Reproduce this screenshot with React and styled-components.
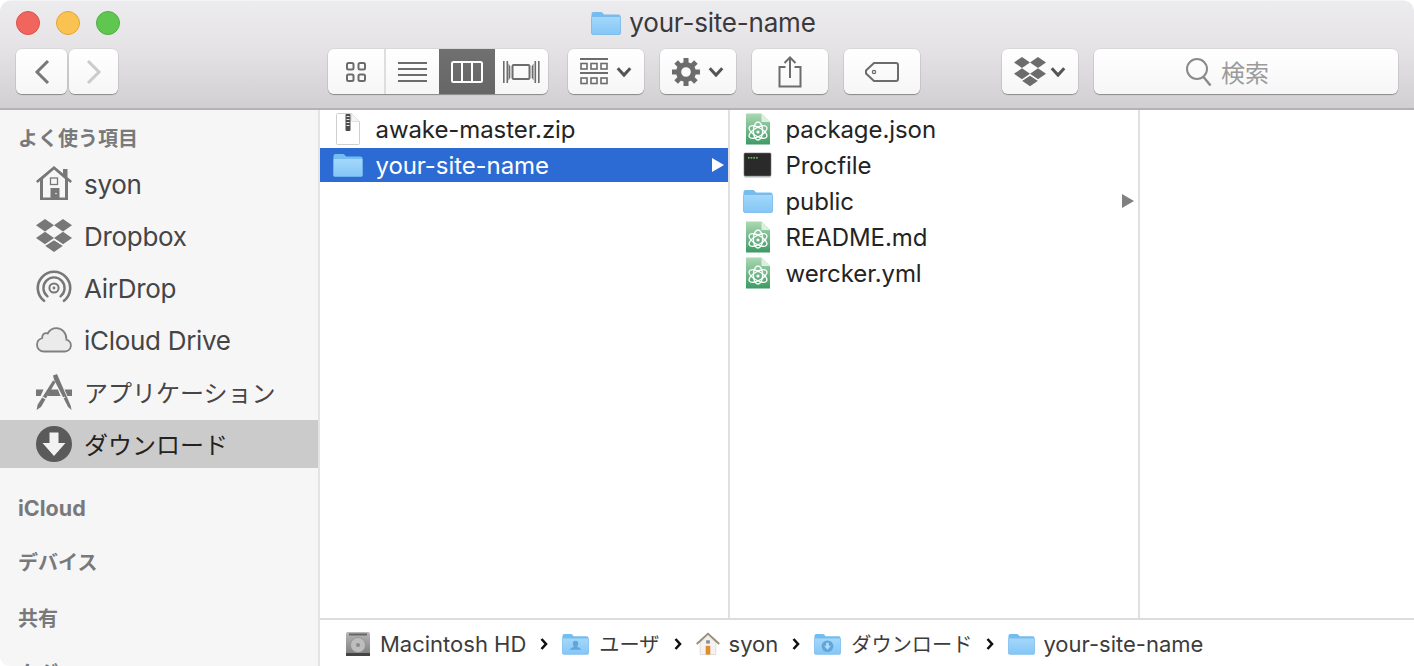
import React from "react";
import styled, { createGlobalStyle } from "styled-components";

const Global = createGlobalStyle`
  html, body { margin: 0; padding: 0; background: #fff; overflow: hidden; }
  * { box-sizing: border-box; }
`;
const FONT = `Inter, "Noto Sans CJK JP", sans-serif`;

const Window = styled.div`
  width: 1414px; height: 666px; overflow: hidden; display: flex; flex-direction: column;
  border-radius: 12px 12px 10px 10px; background: #fff; font-family: ${FONT};
`;
const TitleBar = styled.header`
  height: 110px; flex: none; display: flex; flex-direction: column;
  background: linear-gradient(#ecebee, #e6e4e7 40%, #d1cfd1);
  border-bottom: 2px solid #b4b2b4; border-top: 1px solid #f4f3f5;
`;
const TitleRow = styled.div`
  height: 43px; flex: none; display: grid; grid-template-columns: 1fr auto 1fr; align-items: center; padding: 0 16px;
`;
const Lights = styled.div`display: flex; gap: 16px;`;
const Light = styled.span`
  width: 24px; height: 24px; border-radius: 50%; background: ${p => p.$c}; border: 1px solid ${p => p.$b};
`;
const Title = styled.div`
  display: flex; align-items: center; gap: 8px; font-size: 26px; color: #3a393b; letter-spacing: -0.2px; margin-right: 7px;
`;
const Toolbar = styled.div`display: flex; align-items: flex-start; padding: 5px 16px 0;`;
const ButtonBase = styled.div`
  height: 45px; display: flex; align-items: center; justify-content: center; color: #6c6c6c;
  background: linear-gradient(#ffffff, #f6f6f6); border-radius: 6px;
  box-shadow: 0 1px 1px rgba(0,0,0,.32), 0 0 0 .5px rgba(0,0,0,.1);
`;
const NavButton = styled(ButtonBase)`width: ${p => p.$w}px; margin-right: ${p => p.$mr || 0}px;`;
const ToolButton = styled(ButtonBase)`width: 76px; gap: ${p => p.$gap ?? 8}px; margin-left: ${p => p.$ml || 16}px;`;
const Segmented = styled(ButtonBase)`margin-left: 210px; margin-right: 4px; width: 220px; overflow: hidden; justify-content: flex-start;`;
const Segment = styled.div`
  width: ${p => p.$w}px; height: 100%; display: flex; align-items: center; justify-content: center;
  color: ${p => p.$active ? "#fff" : "#6c6c6c"};
  background: ${p => p.$active ? "linear-gradient(#707070, #666)" : "transparent"};
  border-right: ${p => p.$sep ? "2px solid #dedede" : "none"};
`;
const SearchBox = styled(ButtonBase)`
  width: 304px; margin-left: 16px; gap: 8px; font-size: 24px; color: #9b9b9b; padding-right: 38px;
`;

const Main = styled.div`flex: 1; display: flex; min-height: 0;`;
const Sidebar = styled.aside`
  width: 320px; flex: none; background: #f6f6f6; border-right: 2px solid #e4e4e4; overflow: hidden;
`;
const Heading = styled.div`
  height: ${p => p.$h || 55}px; line-height: ${p => p.$lh || 55}px; padding-left: 18px; font-size: ${p => p.$latin ? 21.5 : 20}px; font-weight: 700; color: #79797b; white-space: nowrap;
`;
const SideList = styled.div`display: flex; flex-direction: column; gap: 4px; margin-bottom: 13px;`;
const SideItem = styled.div`
  height: 48px; display: flex; align-items: center; gap: 12px; padding-left: 36px;
  font-size: ${p => p.$cjk ? 24 : 26}px; letter-spacing: ${p => p.$cjk ? 0 : -0.3}px;
  color: ${p => p.$sel ? "#222" : "#454545"}; background: ${p => p.$sel ? "#cbcbcb" : "transparent"};
`;
const SideIcon = styled.span`width: 36px; height: 36px; flex: none; display: flex; align-items: center; justify-content: center;`;
const CjkLabel = styled.span`margin-top: -2px;`;

const Content = styled.div`flex: 1; min-width: 0; display: flex; flex-direction: column;`;
const Columns = styled.div`flex: 1; display: flex; min-height: 0;`;
const Column = styled.div`
  width: ${p => p.$w ? p.$w + "px" : "auto"}; flex: ${p => p.$w ? "none" : 1};
  border-right: ${p => p.$w ? "2px solid #e0e0e0" : "none"}; padding-top: 2px; display: flex; flex-direction: column; gap: 2px;
`;
const FileRow = styled.div`
  height: 34px; display: flex; align-items: center; gap: 11.5px; padding: 0 4px 0 12px; font-size: 24px; letter-spacing: -0.08px;
  color: ${p => p.$sel ? "#fff" : "#242424"}; background: ${p => p.$sel ? "#2c6bd4" : "transparent"};
`;
const FileIcon = styled.span`width: 32px; height: 34px; flex: none; display: flex; align-items: center; justify-content: center;`;
const Arrow = styled.span`
  margin-left: auto; width: 0; height: 0; border-left: 12px solid ${p => p.$sel ? "#fff" : "#808080"};
  border-top: 7px solid transparent; border-bottom: 7px solid transparent;
`;
const PathBar = styled.div`
  height: 48px; flex: none; border-top: 2px solid #dcdcdc; display: flex; align-items: center; padding: 1px 0 0 26px; font-size: 22px; color: #3c3c3c;
`;
const Crumb = styled.span`display: flex; align-items: center; gap: ${p => p.$gap || 10}px; white-space: nowrap;`;
const CrumbCjk = styled.span`font-size: 20.2px;`;
const CrumbSep = styled.span`display: flex; align-items: center; margin: 0 14px;`;

const Chevron = ({ w = 16, h = 10, c = "#555", sw = 2.4 }) => (
  <svg width={w} height={h} viewBox="0 0 12 8"><path d="M1 1l5 5.5L11 1" fill="none" stroke={c} strokeWidth={sw} /></svg>
);
const PathChevron = () => (
  <svg width="8" height="14" viewBox="0 0 8 14"><path d="M1.5 2l4.5 5-4.5 5" fill="none" stroke="#111" strokeWidth="2.6" /></svg>
);

const Folder = ({ w = 30, h = 24, glyph, id = "f" }) => (
  <svg width={w} height={h} viewBox="0 0 30 24">
    <defs>
      <linearGradient id={id} x1="0" y1="0" x2="0" y2="1">
        <stop offset="0" stopColor="#a4d8fb" /><stop offset="1" stopColor="#84c6f6" />
      </linearGradient>
    </defs>
    <path d="M0.5 3a2 2 0 0 1 2-2h7.5a2 2 0 0 1 1.5.7L13 3.5h14.5a2 2 0 0 1 2 2V6H.5z" fill="#74bdf0" />
    <path d="M.5 6.5a1 1 0 0 1 1-1h27a1 1 0 0 1 1 1V22a1.5 1.5 0 0 1-1.5 1.5H2A1.5 1.5 0 0 1 .5 22z" fill={`url(#${id})`} stroke="#74b8ea" strokeWidth=".8" />
    {glyph === "user" && <path d="M15 8.5a3 3 0 0 1 3 3.2c0 1.3-.6 2.4-1.4 3 .3 1 3.4 1.2 4.4 2.8v1H9v-1c1-1.6 4.1-1.8 4.4-2.8-.8-.6-1.4-1.7-1.4-3a3 3 0 0 1 3-3.2z" fill="#5fa6dc" />}
    {glyph === "down" && <g><circle cx="15" cy="14.5" r="6.5" fill="#5fa6dc" /><path d="M13.6 10.5h2.8v3.5h2.4L15 18.5 11.2 14h2.4z" fill="#b5ddfa" /></g>}
  </svg>
);

const AtomDoc = ({ id }) => (
  <svg width="24" height="32" viewBox="0 0 24 32">
    <defs>
      <linearGradient id={id} x1="0" y1="0" x2="0" y2="1">
        <stop offset="0" stopColor="#acd8b2" /><stop offset=".5" stopColor="#74ba8c" /><stop offset="1" stopColor="#3c9a64" />
      </linearGradient>
    </defs>
    <path d="M0 .5h15.5L24 9V31.5H0z" fill={`url(#${id})`} />
    <path d="M15.5 .5L24 9h-8.5z" fill="#dcefdc" />
    <g fill="none" stroke="#fff" strokeWidth="1.3">
      <ellipse cx="12" cy="19" rx="10" ry="4.4" transform="rotate(30 12 19)" />
      <ellipse cx="12" cy="19" rx="10" ry="4.4" transform="rotate(-30 12 19)" />
      <ellipse cx="12" cy="18" rx="4.6" ry="9" />
    </g>
    <circle cx="12" cy="19" r="1.6" fill="#fff" />
  </svg>
);
const Terminal = () => (
  <svg width="30" height="26" viewBox="0 0 30 26">
    <rect x="1" y="1" width="27" height="23" rx="1" fill="#2a2a2a" stroke="#777" strokeWidth=".6" />
    <rect x="1.5" y="24" width="26" height="1.5" fill="#b5b5b5" />
    <g fill="#6fc24f"><rect x="5" y="5" width="1.6" height="1.6" /><rect x="7.7" y="5" width="1.6" height="1.6" /><rect x="10.4" y="5" width="1.6" height="1.6" /><rect x="13.1" y="5" width="1.6" height="1.6" /></g>
  </svg>
);
const ZipDoc = () => (
  <svg width="24" height="32" viewBox="0 0 24 32">
    <path d="M1.5.5h14l8 8v22a1 1 0 0 1-1 1h-21a1 1 0 0 1-1-1V1.5a1 1 0 0 1 1-1z" fill="#fff" stroke="#cfcfcf" />
    <path d="M15.5.5v7a1 1 0 0 0 1 1h7" fill="#f4f4f4" stroke="#e0e0e0" />
    <rect x="9.5" y="1" width="5" height="17" rx="1" fill="#4a4a4a" />
    <g fill="#e6e6e6"><rect x="10.5" y="3" width="3" height="1" /><rect x="10.5" y="6" width="3" height="1" /><rect x="10.5" y="9" width="3" height="1" /><rect x="10.5" y="12" width="3" height="1" /></g>
  </svg>
);

const House = () => (
  <svg width="36" height="36" viewBox="0 0 36 36">
    <path fillRule="evenodd" fill="#777" d="M18 0L27 7.5V3h4.5v8.2L36 15l-1.6 2L32 15v19H4V15L1.6 17 0 15z M18 3.6L7 13v18.4h7.5V22h9v9.4H29V13z" />
    <rect x="14.5" y="12" width="7" height="6.5" fill="none" stroke="#777" strokeWidth="1.3" />
    <rect x="15" y="22" width="8" height="11" fill="#777" />
    <circle cx="20" cy="27.5" r=".8" fill="#f6f6f6" />
  </svg>
);
const DropboxGlyph = ({ size = 36, c = "#777" }) => (
  <svg width={size} height={size} viewBox="0 0 36 36">
    <g fill={c}>
      <path d="M9 1L18 7.2 9 13.4 0 7.2z" /><path d="M27 1l9 6.2-9 6.2L18 7.2z" />
      <path d="M9 13.8l9 6.2-9 6.2-9-6.2z" /><path d="M27 13.8l9 6.2-9 6.2-9-6.2z" />
      <path d="M18 22l9 5.8 -9 6.2-9-6.2z" />
    </g>
    <path d="M9 27.2L18 21.4l9 5.8" fill="none" stroke="#f6f6f6" strokeWidth="1.2" />
  </svg>
);
const arc = (r) => {
  const a = 38 * Math.PI / 180;
  const x = r * Math.sin(a), y = r * Math.cos(a);
  return `M${18 - x} ${18 + y}A${r} ${r} 0 1 1 ${18 + x} ${18 + y}`;
};
const AirDrop = () => (
  <svg width="36" height="36" viewBox="0 0 36 36">
    <g fill="none" stroke="#777" strokeLinecap="round">
      <path d={arc(16.2)} strokeWidth="2.6" />
      <path d={arc(10.6)} strokeWidth="2.4" />
      <circle cx="18" cy="18" r="4.6" strokeWidth="2" />
    </g>
    <circle cx="18" cy="18" r="1.4" fill="#777" />
  </svg>
);
const Cloud = () => (
  <svg width="36" height="26" viewBox="0 0 36 26">
    <path d="M8 24.5h21a6 6 0 0 0 1.4-11.8C30.6 6 26 1.2 20.5 1.2c-3.8 0-7 2-8.8 5.3C10 5.6 7.2 6.2 6.4 9c-.2.7-.2 1.3-.2 2C3 12 1 14.8 1 17.8c0 3.8 3 6.7 7 6.7z" fill="#ebebeb" stroke="#808080" strokeWidth="1.8" />
  </svg>
);
const Apps = () => (
  <svg width="36" height="36" viewBox="0 0 36 36">
    <g fill="#777">
      <path d="M0 15.5h7.5L4.6 22H0zM36 15.5h-7.5l2.9 6.5H36zM11.5 22l2.6-6.5h7.8l2.6 6.5z" />
      <path d="M17 1.5L21 0l13.6 31.5 1 4.5-3.5-3L18 5.5z" />
      <path d="M17 6.5l2.6 1.6L5 33l-4.4 3 1-5.2z" />
    </g>
    <path d="M25 25l4-2" stroke="#f6f6f6" strokeWidth="1.2" />
    <path d="M10 25l-3.6-2" stroke="#f6f6f6" strokeWidth="1.2" />
  </svg>
);
const Download = () => (
  <svg width="36" height="36" viewBox="0 0 36 36">
    <circle cx="18" cy="18" r="18" fill="#5a5a5a" />
    <path d="M13.5 6.5h9V17h7L18 30 6.5 17h7z" fill="#f2f2f2" />
  </svg>
);

const HD = () => (
  <svg width="24" height="26" viewBox="0 0 24 26">
    <defs><linearGradient id="hd" x1="0" y1="0" x2="0" y2="1"><stop offset="0" stopColor="#b8b8b8" /><stop offset="1" stopColor="#7c7c7c" /></linearGradient></defs>
    <rect x="0" y="1" width="24" height="24" rx="2" fill="url(#hd)" />
    <rect x="3" y="2.5" width="18" height="2" fill="#666" />
    <circle cx="12" cy="14" r="7.5" fill="#bdbdbd" stroke="#8e8e8e" strokeWidth=".7" />
    <circle cx="12" cy="14" r="2" fill="#8a8a8a" />
    <rect x="0" y="22" width="24" height="3" fill="#444" />
  </svg>
);
const SmallHome = () => (
  <svg width="24" height="26" viewBox="0 0 26 26">
    <path d="M4.5 11.5L13 4l8.5 7.5V24.5h-17z" fill="#f2f2f2" stroke="#cfcfcf" strokeWidth=".7" />
    <path d="M.8 13L13 1.8 25.2 13" fill="none" stroke="#9a8a70" strokeWidth="2" />
    <rect x="10.5" y="15" width="5" height="9.5" fill="#e28b2c" />
    <rect x="11" y="9" width="4" height="3.5" fill="#8b8b8b" />
  </svg>
);

const IconsView = () => (
  <svg width="22" height="22" viewBox="0 0 22 22" fill="none" stroke="currentColor" strokeWidth="2">
    <rect x="2" y="2" width="6.5" height="6.5" rx="1.5" /><rect x="13.5" y="2" width="6.5" height="6.5" rx="1.5" />
    <rect x="2" y="13.5" width="6.5" height="6.5" rx="1.5" /><rect x="13.5" y="13.5" width="6.5" height="6.5" rx="1.5" />
  </svg>
);
const ListView = () => (
  <svg width="30" height="22" viewBox="0 0 30 22" fill="currentColor">
    <rect y="1" width="29" height="2" /><rect y="7" width="29" height="2" /><rect y="13" width="29" height="2" /><rect y="19" width="29" height="2" />
  </svg>
);
const ColumnView = () => (
  <svg width="32" height="22" viewBox="0 0 32 22" fill="none" stroke="currentColor" strokeWidth="2">
    <rect x="1" y="1" width="30" height="20" rx="1.5" /><path d="M11 1v20M21 1v20" />
  </svg>
);
const FlowView = () => (
  <svg width="37" height="22" viewBox="0 0 37 22" fill="currentColor">
    <rect x="0" y="0" width="1.6" height="22" /><rect x="3.5" y="0" width="1.6" height="22" />
    <path d="M5.5 2.5l1.8 3v11l-1.8 3z" />
    <rect x="9.5" y="4" width="17" height="14" rx="1.2" fill="none" stroke="currentColor" strokeWidth="2" />
    <path d="M30.5 2.5l-1.8 3v11l1.8 3z" />
    <rect x="31.5" y="0" width="1.6" height="22" /><rect x="35" y="0" width="1.6" height="22" />
  </svg>
);
const Arrange = () => (
  <svg width="28" height="30" viewBox="0 0 28 30" fill="none" stroke="currentColor">
    <path d="M0 2h28M0 16h28" strokeWidth="2" />
    <g strokeWidth="1.6">
      <rect x="1" y="6.5" width="6" height="5.5" /><rect x="11" y="6.5" width="6" height="5.5" /><rect x="21" y="6.5" width="6" height="5.5" />
      <rect x="1" y="21" width="6" height="5.5" /><rect x="11" y="21" width="6" height="5.5" /><rect x="21" y="21" width="6" height="5.5" />
    </g>
  </svg>
);
const Gear = () => (
  <svg width="28" height="28" viewBox="0 0 28 28" fill="#6c6c6c">
    <path fillRule="evenodd" d="M14 4a10 10 0 1 1 0 20 10 10 0 0 1 0-20zM14 9.2a4.8 4.8 0 1 0 0 9.6 4.8 4.8 0 0 0 0-9.6z" />
    {[0, 45, 90, 135, 180, 225, 270, 315].map(a => (
      <rect key={a} x="11.5" y="0" width="5" height="6" transform={`rotate(${a} 14 14)`} />
    ))}
  </svg>
);
const Share = () => (
  <svg width="24" height="32" viewBox="0 0 24 32" fill="none" stroke="currentColor" strokeWidth="2">
    <path d="M7.5 11H1.5v19.5h21V11h-6M12 22V2M6.5 7L12 1.5 17.5 7" />
  </svg>
);
const Tag = () => (
  <svg width="34" height="20" viewBox="0 0 34 20" fill="none" stroke="currentColor" strokeWidth="2">
    <path d="M9 1h22a2 2 0 0 1 2 2v14a2 2 0 0 1-2 2H9L1 11.5v-3z" /><circle cx="9" cy="10" r="1.6" strokeWidth="1.3" />
  </svg>
);
const Magnifier = () => (
  <svg width="28" height="30" viewBox="0 0 28 30" fill="none" stroke="#8a8a8a" strokeWidth="2">
    <circle cx="12" cy="12" r="10" /><path d="M18.5 20l7 8.5" strokeWidth="2.4" />
  </svg>
);

export default function App() {
  return (
    <>
      <Global />
      <Window>
        <TitleBar>
          <TitleRow>
            <Lights>
              <Light $c="#f0665e" $b="#dc5148" />
              <Light $c="#f9c251" $b="#e2a63a" />
              <Light $c="#5fc650" $b="#4fad42" />
            </Lights>
            <Title><Folder id="ft" />your-site-name</Title>
          </TitleRow>
          <Toolbar>
            <NavButton $w={51} $mr={2}>
              <svg width="18" height="26" viewBox="0 0 18 26"><path d="M15 2L4 13l11 11" fill="none" stroke="#787878" strokeWidth="3" /></svg>
            </NavButton>
            <NavButton $w={49}>
              <svg width="18" height="26" viewBox="0 0 18 26"><path d="M3 2l11 11L3 24" fill="none" stroke="#cbcbcb" strokeWidth="3" /></svg>
            </NavButton>
            <Segmented>
              <Segment $w={58} $sep><IconsView /></Segment>
              <Segment $w={53}><ListView /></Segment>
              <Segment $w={56} $active><ColumnView /></Segment>
              <Segment $w={53}><FlowView /></Segment>
            </Segmented>
            <ToolButton><Arrange /><Chevron /></ToolButton>
            <ToolButton><Gear /><Chevron /></ToolButton>
            <ToolButton><Share /></ToolButton>
            <ToolButton><Tag /></ToolButton>
            <ToolButton $ml={82} $gap={4}><DropboxGlyph size={32} c="#6c6c6c" /><Chevron /></ToolButton>
            <SearchBox><Magnifier />検索</SearchBox>
          </Toolbar>
        </TitleBar>
        <Main>
          <Sidebar>
            <Heading $h={50} $lh={58}>よく使う項目</Heading>
            <SideList>
              <SideItem><SideIcon><House /></SideIcon>syon</SideItem>
              <SideItem><SideIcon><DropboxGlyph /></SideIcon>Dropbox</SideItem>
              <SideItem><SideIcon><AirDrop /></SideIcon>AirDrop</SideItem>
              <SideItem><SideIcon><Cloud /></SideIcon>iCloud Drive</SideItem>
              <SideItem $cjk><SideIcon><Apps /></SideIcon><CjkLabel>アプリケーション</CjkLabel></SideItem>
              <SideItem $cjk $sel><SideIcon><Download /></SideIcon><CjkLabel>ダウンロード</CjkLabel></SideItem>
            </SideList>
            <Heading $latin>iCloud</Heading>
            <Heading $h={56}>デバイス</Heading>
            <Heading>共有</Heading>
            <Heading>タグ</Heading>
          </Sidebar>
          <Content>
            <Columns>
              <Column $w={410}>
                <FileRow><FileIcon><ZipDoc /></FileIcon>awake-master.zip</FileRow>
                <FileRow $sel><FileIcon><Folder id="f1" /></FileIcon>your-site-name<Arrow $sel /></FileRow>
              </Column>
              <Column $w={410}>
                <FileRow><FileIcon><AtomDoc id="a1" /></FileIcon>package.json</FileRow>
                <FileRow><FileIcon><Terminal /></FileIcon>Procfile</FileRow>
                <FileRow><FileIcon><Folder id="f2" /></FileIcon>public<Arrow /></FileRow>
                <FileRow><FileIcon><AtomDoc id="a2" /></FileIcon>README.md</FileRow>
                <FileRow><FileIcon><AtomDoc id="a3" /></FileIcon>wercker.yml</FileRow>
              </Column>
              <Column />
            </Columns>
            <PathBar>
              <Crumb><HD />Macintosh HD</Crumb>
              <CrumbSep><PathChevron /></CrumbSep>
              <Crumb><Folder w={27} h={22} glyph="user" id="p1" /><CrumbCjk>ユーザ</CrumbCjk></Crumb>
              <CrumbSep><PathChevron /></CrumbSep>
              <Crumb $gap={9}><SmallHome />syon</Crumb>
              <CrumbSep><PathChevron /></CrumbSep>
              <Crumb><Folder w={27} h={22} glyph="down" id="p2" /><CrumbCjk>ダウンロード</CrumbCjk></Crumb>
              <CrumbSep><PathChevron /></CrumbSep>
              <Crumb $gap={8}><Folder w={27} h={22} id="p3" />your-site-name</Crumb>
            </PathBar>
          </Content>
        </Main>
      </Window>
    </>
  );
}
